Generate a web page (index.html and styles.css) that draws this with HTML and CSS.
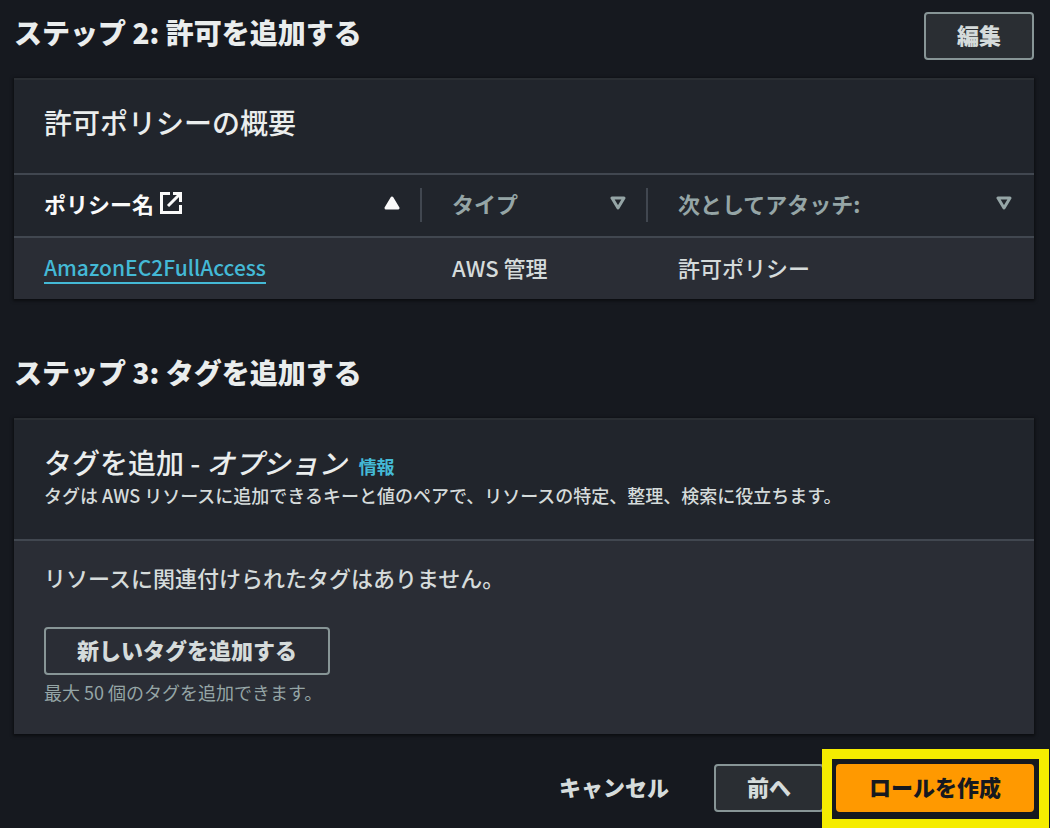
FILE: index.html
```
<!DOCTYPE html>
<html lang="ja">
<head>
  <meta charset="UTF-8">
  <meta name="viewport" content="width=device-width, initial-scale=1.0">
  <title>ロールを作成</title>
  <link rel="stylesheet" href="styles.css">
</head>
<body>
<main class="page">
  <!-- Step 2 -->
  <section class="step">
    <div class="step-header">
      <h2 class="step-title">ステップ 2: 許可を追加する</h2>
      <button type="button" class="btn">編集</button>
    </div>
    <div class="panel">
      <div class="panel-header">
        <h3 class="panel-title">許可ポリシーの概要</h3>
      </div>
      <table class="policy-table">
        <colgroup>
          <col class="col-name">
          <col class="col-type">
          <col>
        </colgroup>
        <thead>
          <tr>
            <th scope="col" class="sorted" aria-sort="ascending">
              <div class="th-inner">
                <span class="th-label">ポリシー名
                  <svg class="icon-external" viewBox="0 0 22 22" aria-hidden="true">
                    <path d="M10 1.500H1.500v19h19V13M13 1.500h7.500V10M20 2L8 14"/>
                  </svg>
                </span>
                <svg class="icon-sort up" viewBox="0 0 16 14" aria-hidden="true"><path d="M8 2l6 10H2z"/></svg>
              </div>
            </th>
            <th scope="col">
              <div class="th-inner">
                <span class="th-label">タイプ</span>
                <svg class="icon-sort" viewBox="0 0 16 14" aria-hidden="true"><path d="M2 2h12L8 12z"/></svg>
              </div>
            </th>
            <th scope="col">
              <div class="th-inner last">
                <span class="th-label">次としてアタッチ:</span>
                <svg class="icon-sort" viewBox="0 0 16 14" aria-hidden="true"><path d="M2 2h12L8 12z"/></svg>
              </div>
            </th>
          </tr>
        </thead>
        <tbody>
          <tr>
            <td><a href="#" class="policy-link">AmazonEC2FullAccess</a></td>
            <td>AWS 管理</td>
            <td>許可ポリシー</td>
          </tr>
        </tbody>
      </table>
    </div>
  </section>

  <!-- Step 3 -->
  <section class="step">
    <div class="step-header">
      <h2 class="step-title">ステップ 3: タグを追加する</h2>
    </div>
    <div class="panel">
      <div class="panel-header">
        <div class="title-row">
          <h3 class="panel-title">タグを追加 - <em>オプション</em></h3>
          <a href="#" class="info-link">情報</a>
        </div>
        <p class="description">タグは AWS リソースに追加できるキーと値のペアで、リソースの特定、整理、検索に役立ちます。</p>
      </div>
      <div class="panel-body">
        <p class="empty-text">リソースに関連付けられたタグはありません。</p>
        <button type="button" class="btn btn-add">新しいタグを追加する</button>
        <p class="hint">最大 50 個のタグを追加できます。</p>
      </div>
    </div>
  </section>

  <!-- Footer -->
  <div class="actions">
    <button type="button" class="btn btn-link">キャンセル</button>
    <button type="button" class="btn">前へ</button>
    <div class="highlight">
      <button type="button" class="btn btn-primary">ロールを作成</button>
    </div>
  </div>
</main>
</body>
</html>
```
FILE: styles.css
```
* {
  box-sizing: border-box;
}

body {
  margin: 0;
  background: #16191f;
  color: #d5dbdb;
  font-family: "Noto Sans CJK JP", sans-serif;
  font-size: 22px;
  font-weight: 500;
  line-height: 32px;
}

h2, h3, p {
  margin: 0;
}

.page {
  min-height: 100vh;
  padding: 12px 16px 15px 14px;
  overflow: hidden;
}

.step + .step {
  margin-top: 53px;
}

.step-header {
  display: flex;
  align-items: flex-start;
  justify-content: space-between;
  min-height: 48px;
  margin-bottom: 18px;
}

.step-title {
  color: #eaeded;
  font-size: 28px;
  font-weight: 900;
  line-height: 40px;
}

/* Buttons */
.btn {
  height: 48px;
  padding: 0 31px 4px;
  background: #2a2e33;
  border: 2px solid #879596;
  border-radius: 4px;
  color: #d5dbdb;
  font-family: inherit;
  font-size: 22px;
  font-weight: 900;
  line-height: 40px;
  white-space: nowrap;
  cursor: pointer;
}

.btn:hover {
  border-color: #d5dbdb;
}

.btn-add {
  display: block;
  background: transparent;
}

.btn-link {
  background: transparent;
  border-color: transparent;
}

.btn-primary {
  position: relative;
  background: #ff9900;
  border-color: #ff9900;
  color: #16191f;
}

/* Panels */
.panel {
  background: #2a2d35;
  border-top: 2px solid #2a2e33;
  box-shadow: 0 1px 3px 1px rgba(0, 0, 0, 0.5);
}

.panel-header {
  padding: 22px 30px 31px;
  background: #21252c;
  border-bottom: 2px solid #414750;
}

.panel-title {
  color: #eaeded;
  font-size: 28px;
  font-weight: 500;
  line-height: 40px;
}

.title-row {
  display: flex;
  align-items: baseline;
  gap: 12px;
}

.info-link {
  color: #44b9d6;
  font-size: 18px;
  font-weight: 700;
  line-height: 24px;
  text-decoration: none;
}

.description {
  font-size: 18px;
  line-height: 26px;
}

.panel-body {
  padding: 20px 30px 29px;
}

.empty-text {
  margin-bottom: 34px;
}

.hint {
  margin-top: 4px;
  color: #95a5a6;
  font-size: 18px;
  font-weight: 400;
  line-height: 26px;
}

/* Policy table */
.policy-table {
  width: 100%;
  border-collapse: collapse;
  table-layout: fixed;
}

.col-name {
  width: 40%;
}

.col-type {
  width: 226px;
}

.policy-table thead {
  background: #21252c;
}

.policy-table th {
  padding: 13px 0 14px;
  border-bottom: 2px solid #414750;
  color: #95a5a6;
  text-align: left;
}

.policy-table td {
  padding: 12px 30px 15px;
}

.th-inner {
  display: flex;
  align-items: center;
  justify-content: space-between;
  height: 34px;
  padding: 0 20px 4px 30px;
  border-right: 2px solid #414750;
}

.th-inner.last {
  padding-right: 22px;
  border-right: 0;
}

.sorted .th-inner {
  color: #fafafa;
}

.th-label {
  display: flex;
  align-items: center;
  gap: 6px;
}

.icon-external {
  width: 22px;
  height: 22px;
  fill: none;
  stroke: currentColor;
  stroke-width: 3;
}

.icon-sort {
  width: 16px;
  height: 14px;
  fill: none;
  stroke: currentColor;
  stroke-width: 3;
  stroke-linejoin: round;
}

.icon-sort.up {
  fill: currentColor;
}

.policy-link {
  display: inline-block;
  border-bottom: 2px solid #44b9d6;
  color: #44b9d6;
  font-size: 21px;
  line-height: 30px;
  text-decoration: none;
}

/* Footer */
.actions {
  display: flex;
  justify-content: flex-end;
  gap: 12px;
  margin-top: 30px;
}

.highlight {
  position: relative;
}

/* Yellow frame drawn around the primary button */
.highlight::before {
  content: "";
  position: absolute;
  inset: -15px -15px -17px -14px;
  background: #16191f;
  border: 10px solid #f5ec00;
}
```
